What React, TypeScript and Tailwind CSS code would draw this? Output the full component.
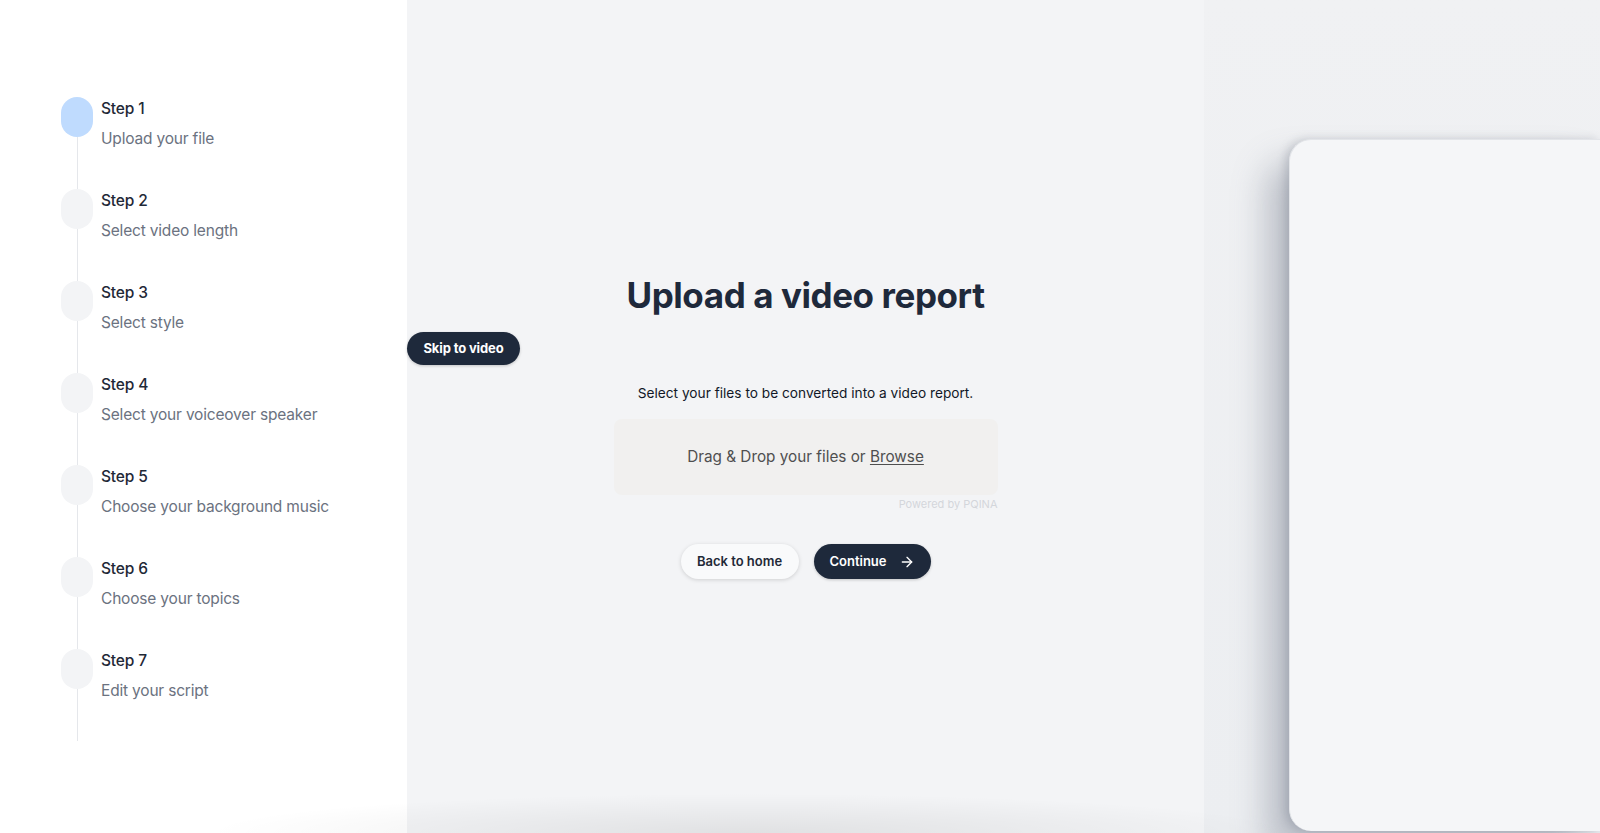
import { ArrowRight } from 'lucide-react';

const steps = [
  'Upload your file',
  'Select video length',
  'Select style',
  'Select your voiceover speaker',
  'Choose your background music',
  'Choose your topics',
  'Edit your script',
];

function Sidebar() {
  return (
    <aside className="w-[407px] shrink-0 bg-white pl-[61px] pt-[97px]">
      {steps.map((desc, i) => (
        <div key={desc} className="flex gap-2">
          <div className="flex w-8 flex-col items-center">
            <div className={`h-10 w-8 rounded-full ${i === 0 ? 'bg-[#bfdbfe]' : 'bg-[#f3f4f6]'}`} />
            <div className="h-[52px] w-px bg-[#e5e7eb]" />
          </div>
          <div>
            <p className="text-[15.5px] font-medium leading-6 tracking-[-0.01em] text-[#1f2937]">Step {i + 1}</p>
            <p className="mt-1.5 text-[15.5px] leading-6 tracking-[-0.012em] text-[#6b7280]">{desc}</p>
          </div>
        </div>
      ))}
    </aside>
  );
}

function Main() {
  return (
    <main className="relative flex flex-1 flex-col items-center bg-[#f3f4f6] pt-[275px]">
      {/* floating skip button */}
      <button className="absolute left-0 top-[332px] h-[33px] w-[113px] rounded-full bg-[#1e293b] text-[13px] font-bold tracking-[-0.01em] text-white shadow-[0_1px_3px_rgba(0,0,0,0.2)]">
        Skip to video
      </button>

      <h1 className="text-[35px] font-bold leading-10 tracking-[-0.012em] text-[#1e293b]">Upload a video report</h1>

      <p className="mt-[68px] text-[13.7px] leading-5 text-[#111827]">Select your files to be converted into a video report.</p>

      <div className="mt-[16px] w-[384px]">
        <div className="flex h-[76px] items-center justify-center rounded-lg bg-[#f1f0ef] text-[15.3px] text-[#4f4f4f]">
          <span>
            Drag &amp; Drop your files or <span className="underline decoration-1 underline-offset-2">Browse</span>
          </span>
        </div>
        <p className="mt-[3px] text-right text-[11px] leading-3 text-[#d3d6db]">Powered by PQINA</p>
      </div>

      <div className="mt-[34px] flex gap-[15px]">
        <button className="h-[35px] w-[118px] rounded-full bg-[#f9fafb] text-[13px] font-semibold text-[#1f2937] shadow-[0_1px_4px_rgba(0,0,0,0.15)]">
          Back to home
        </button>
        <button className="flex h-[35px] w-[117px] items-center justify-center gap-3 rounded-full bg-[#1e293b] text-[13px] font-semibold text-white shadow-[0_1px_3px_rgba(0,0,0,0.2)]">
          Continue
          <ArrowRight size={16} strokeWidth={2} />
        </button>
      </div>
    </main>
  );
}

function Preview() {
  return (
    <section className="flex w-[396px] shrink-0 flex-col bg-gradient-to-b from-[#f0f1f3] to-[#eceef1] pl-[85px] pt-[139px]">
      <div className="mb-[2px] flex-1 rounded-tl-[22px] rounded-bl-[22px] border-l border-t border-[#e3e5e9] bg-[#f5f6f8] shadow-[-22px_24px_34px_rgba(100,108,125,0.38),-4px_0_8px_rgba(100,108,125,0.25)]" />
    </section>
  );
}

export default function App() {
  return (
    <div className="relative flex h-[833px] w-full overflow-hidden font-['Inter',_'Liberation_Sans',_sans-serif]">
      <Sidebar />
      <Main />
      <Preview />
      <div className="pointer-events-none absolute bottom-0 left-[200px] h-[40px] w-[1100px] bg-[radial-gradient(ellipse_at_bottom,rgba(0,0,0,0.08),transparent_70%)]" />
    </div>
  );
}
